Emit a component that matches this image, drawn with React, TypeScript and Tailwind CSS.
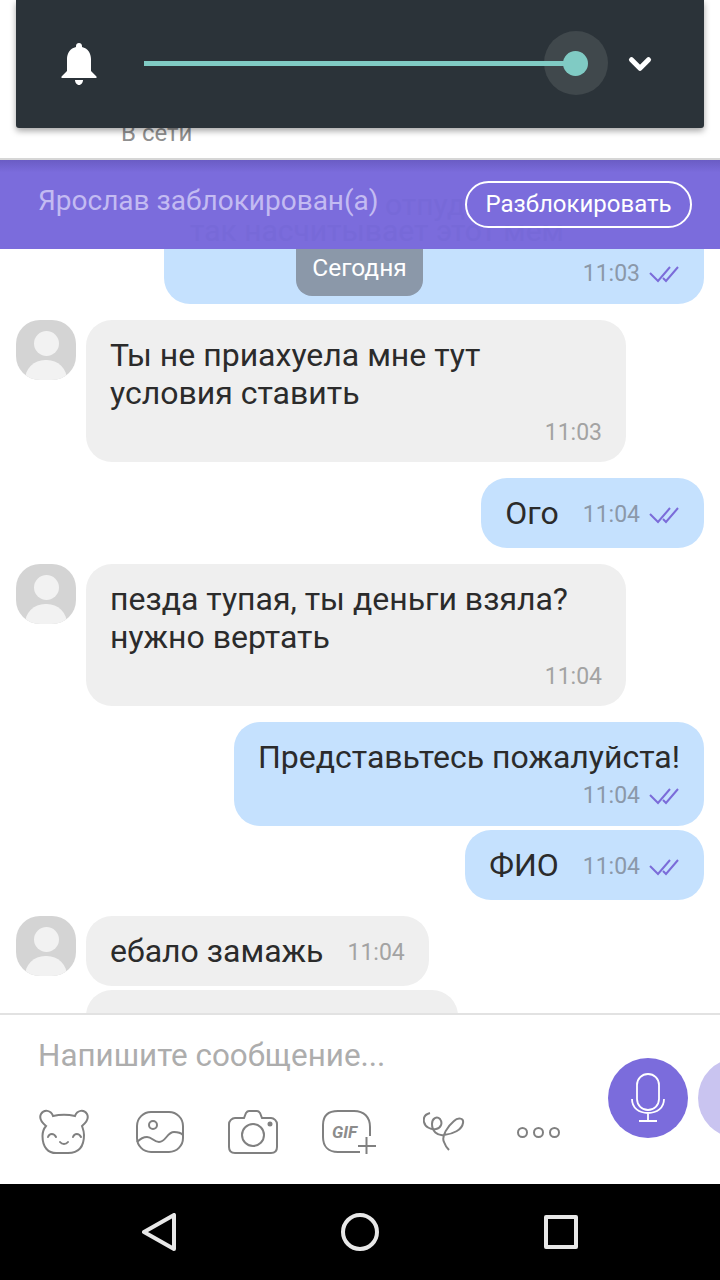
import { ChevronDown } from "lucide-react";

const ticks = (
  <svg width="32" height="20" viewBox="0 0 32 20" fill="none" stroke="#7b6cd9" strokeWidth="2" className="ml-2">
    <path d="M2 9l8 8L22 3" />
    <path d="M15 14l3 3L30 3" />
  </svg>
);

function Time({ t, read }: { t: string; read?: boolean }) {
  return (
    <span className={`flex items-center text-[23px] leading-[30px] ${read ? "text-[#8b98a9]" : "text-[#a3a3a3]"}`}>
      {t}
      {read && ticks}
    </span>
  );
}

function Avatar() {
  return (
    <div className="relative w-[60px] h-[60px] shrink-0 rounded-[24px] bg-[#d4d4d4] overflow-hidden">
      <div className="absolute left-[18px] top-[11px] w-[25px] h-[25px] rounded-full bg-[#f2f2f2]" />
      <div className="absolute left-[9px] top-[40px] w-[42px] h-[30px] rounded-t-[20px] bg-[#f2f2f2]" />
    </div>
  );
}

function Incoming({ lines, time, inline }: { lines: string[]; time: string; inline?: boolean }) {
  return (
    <div className="flex gap-[10px] pl-4">
      <Avatar />
      {inline ? (
        <div className="flex items-center h-[70px] pl-6 pr-6 rounded-[26px] bg-[#efefef]">
          <span className="text-[32px] text-[#2b2b2b]">{lines[0]}</span>
          <span className="ml-6 mt-[4px]">
            <Time t={time} />
          </span>
        </div>
      ) : (
        <div className="w-[540px] h-[142px] pl-6 pr-6 pt-[16px] rounded-[26px] bg-[#efefef]">
          {lines.map((l) => (
            <div key={l} className="text-[32px] leading-[38px] text-[#2b2b2b]">
              {l}
            </div>
          ))}
          <div className="flex justify-end mt-[6px]">
            <Time t={time} />
          </div>
        </div>
      )}
    </div>
  );
}

function Outgoing({ text, time, stacked }: { text: string; time: string; stacked?: boolean }) {
  return (
    <div className="flex justify-end pr-4">
      {stacked ? (
        <div className="h-[104px] pl-6 pr-6 pt-[16px] rounded-[26px] bg-[#c5e1fe]">
          <div className="text-[32px] leading-[38px] text-[#2b2b2b]">{text}</div>
          <div className="flex justify-end mt-[5px]">
            <Time t={time} read />
          </div>
        </div>
      ) : (
        <div className="flex items-center h-[70px] pl-6 pr-6 rounded-[26px] bg-[#c5e1fe]">
          <span className="text-[32px] text-[#2b2b2b]">{text}</span>
          <span className="ml-6 mt-[3px]">
            <Time t={time} read />
          </span>
        </div>
      )}
    </div>
  );
}

export default function App() {
  return (
    <div className="relative w-[720px] h-[1280px] flex flex-col overflow-hidden bg-white" style={{ fontFamily: "Roboto, sans-serif" }}>
      {/* volume panel lies over the chat header */}
      <div className="absolute left-4 top-0 z-30 w-[688px] h-[128px] flex items-center rounded-b-[3px] bg-[#2b3339] shadow-[0_3px_6px_rgba(0,0,0,0.35)]">
        <svg width="36" height="42" viewBox="0 0 36 42" fill="#fff" className="ml-[45px] mt-[-1px]">
          <path d="M18 0c1.700 0 3 1.300 3 3v1c5.700 1.300 9 6.300 9 12v12l5.500 5.500V35H.5v-1.500L6 28V16C6 10.300 9.300 5.300 15 4V3c0-1.700 1.300-3 3-3z" />
          <path d="M14 37h8c0 2.500-1.800 5-4 5s-4-2.500-4-5z" />
        </svg>
        <div className="relative ml-[47px] w-[432px] h-[5px] mt-[-1px]">
          <div className="absolute right-[-32px] top-[-30px] w-[64px] h-[64px] rounded-full bg-[#40484c]" />
          <div className="absolute inset-0 bg-[#80cbc4]" />
          <div className="absolute right-[-12px] top-[-10px] w-[25px] h-[25px] rounded-full bg-[#80cbc4]" />
        </div>
        <ChevronDown size={34} strokeWidth={3.6} color="#fff" className="ml-[47px]" />
      </div>

      <header className="h-[159px] shrink-0 bg-white pt-[121px] pl-[121px]">
        <div className="text-[24px] leading-6 text-[#8f8f8f]">В сети</div>
      </header>
      <div className="h-[2px] shrink-0 bg-[#d6d6d6] relative z-20 -mt-[1px]" />

      <div className="relative z-20 h-[89px] shrink-0 flex items-center justify-between pl-[38px] pr-7 overflow-hidden bg-gradient-to-b from-[#6a5cc4] to-[#7b6cdc] to-[14%]">
        <span className="absolute left-[385px] top-[22px] text-[30px] text-[#7769d8]">отпуд</span>
        <span className="absolute left-[190px] top-[53px] text-[30px] leading-[35px] text-[#7769d8]">так насчитывает этот мем</span>
        <span className="relative text-[28px] text-[#c3bbf2] mt-[-8px]">Ярослав заблокирован(а)</span>
        <span className="relative flex items-center justify-center w-[227px] h-[47px] mt-[-1px] rounded-full border-2 border-white text-white text-[24px]">
          Разблокировать
        </span>
      </div>

      <main className="relative flex-1 min-h-0 overflow-hidden flex flex-col gap-4">
        <div className="absolute left-[296px] top-0 z-10 w-[127px] h-[47px] pb-[8px] flex items-center justify-center rounded-b-[16px] bg-[#8b98a9] text-white text-[24.5px]">
          Сегодня
        </div>
        <div className="flex justify-end pr-4 shrink-0">
          <div className="w-[540px] h-[55px] pb-[6px] flex items-center justify-end pr-6 rounded-b-[26px] bg-[#c5e1fe]">
            <Time t="11:03" read />
          </div>
        </div>
        <Incoming lines={["Ты не приахуела мне тут", "условия ставить"]} time="11:03" />
        <Outgoing text="Ого" time="11:04" />
        <Incoming lines={["пезда тупая, ты деньги взяла?", "нужно вертать"]} time="11:04" />
        <div className="flex flex-col gap-1">
          <Outgoing text="Представьтесь пожалуйста!" time="11:04" stacked />
          <Outgoing text="ФИО" time="11:04" />
        </div>
        <div className="flex flex-col gap-1">
          <Incoming lines={["ебало замажь"]} time="11:04" inline />
          <div className="ml-[86px] w-[372px] h-[70px] shrink-0 rounded-[26px] bg-[#efefef]" />
        </div>
      </main>

      <footer className="relative h-[171px] shrink-0 border-t-2 border-[#e2e2e2] bg-white">
        <div className="pl-[38px] pt-[23px] text-[31.4px] leading-[36px] text-[#adadad]">Напишите сообщение...</div>
        <div className="flex items-center h-[46px] pl-[38px] mt-[35px] gap-[45px]">
          <svg width="52" height="46" viewBox="0 0 52 46" fill="none" stroke="#808080" strokeWidth="2">
            <path d="M8 17C3 13 1 9 3 5c3-5 10-4 12 2 7-1.500 15-1.500 22 0 2-6 9-7 12-2 2 4 0 8-5 12 1 3 2 5 2 9 0 12-6 18-16 18H20C10 45 4.500 38 4.500 27c0-4 1-7 3.500-10z" />
            <path d="M10 28c1.500-4 6-4 8 0M35 28c1.500-4 6-4 8 0M22 33c2 2.500 6 2.500 8 0" strokeLinecap="round" />
          </svg>
          <svg width="48" height="42" viewBox="0 0 48 42" fill="none" stroke="#808080" strokeWidth="2" className="ml-[1px]">
            <rect x="1" y="1" width="46" height="40" rx="14" />
            <circle cx="17" cy="14" r="4" />
            <path d="M1 31C4 28 8 26 11 26C16 26 18 31 23 31C30 31 31 21 38 21C42 21 45 22 47 24" />
          </svg>
          <svg width="50" height="44" viewBox="0 0 50 44" fill="none" stroke="#808080" strokeWidth="2" className="-ml-[1px]">
            <path d="M7 8h9l2-5c1-1.500 2-2 3-2h8c1 0 2 .5 3 2l2 5h9c3 0 6 3 6 6v23c0 4-2 6-6 6H7c-4 0-6-2-6-6V14c0-3 3-6 6-6z" />
            <circle cx="25" cy="25" r="11" />
            <circle cx="42" cy="14" r="1.500" fill="#808080" />
          </svg>
          <div className="relative w-[54px] h-[46px] -ml-[1px]">
            <svg width="54" height="46" viewBox="0 0 54 46" fill="none" stroke="#808080" strokeWidth="2" className="absolute inset-0">
              <path d="M38 43H16C6 43 1 37 1 28V16C1 7 6 2 16 2h16C42 2 48 8 48 18v9" />
              <path d="M44.500 28v17M36 37h18" />
            </svg>
            <span className="absolute left-[10px] top-[12px] text-[17px] leading-[22px] italic font-bold text-[#8c8c8c]">GIF</span>
          </div>
          <svg width="42" height="40" viewBox="0 0 42 40" fill="none" stroke="#808080" strokeWidth="2" className="ml-[2px]">
            <path d="M7 1C3 2 0 5 1 10C2 15 8 18 13 17C18 16 20 11 17 7C14 4 9 6 9 12C9 19 14 24 21 23C30 22 39 18 40 11C41 6 35 5 31 9C25 14 18 24 21 30C22 33 24 36 26 38" />
          </svg>
          <div className="flex gap-[5px] ml-[7px]">
            <div className="w-[11px] h-[11px] rounded-full border-2 border-[#808080]" />
            <div className="w-[11px] h-[11px] rounded-full border-2 border-[#808080]" />
            <div className="w-[11px] h-[11px] rounded-full border-2 border-[#808080]" />
          </div>
        </div>
        <div className="absolute left-[608px] top-[43px] w-20 h-20 rounded-full bg-[#7b6cdc] flex items-center justify-center">
          <svg width="34" height="50" viewBox="0 0 34 50" fill="none" stroke="#fff" strokeWidth="1.800">
            <rect x="6" y="1" width="22" height="36" rx="11" />
            <path d="M1 26c0 9 7 14 16 14s16-5 16-14M17 40v8M8 48h18" />
          </svg>
        </div>
        <div className="absolute left-[698px] top-[43px] w-20 h-20 rounded-full bg-[#c9c4f0]" />
      </footer>

      <nav className="h-[96px] shrink-0 bg-black flex items-center justify-center gap-[165px] pb-[1px]">
        <svg width="34" height="38" viewBox="0 0 34 38" fill="none" stroke="#e8e8e8" strokeWidth="4" strokeLinejoin="round">
          <path d="M32 2v34L2 19z" />
        </svg>
        <div className="w-[38px] h-[38px] rounded-full border-4 border-[#e8e8e8]" />
        <div className="w-[34px] h-[34px] rounded-[2px] border-4 border-[#e8e8e8]" />
      </nav>
    </div>
  );
}
